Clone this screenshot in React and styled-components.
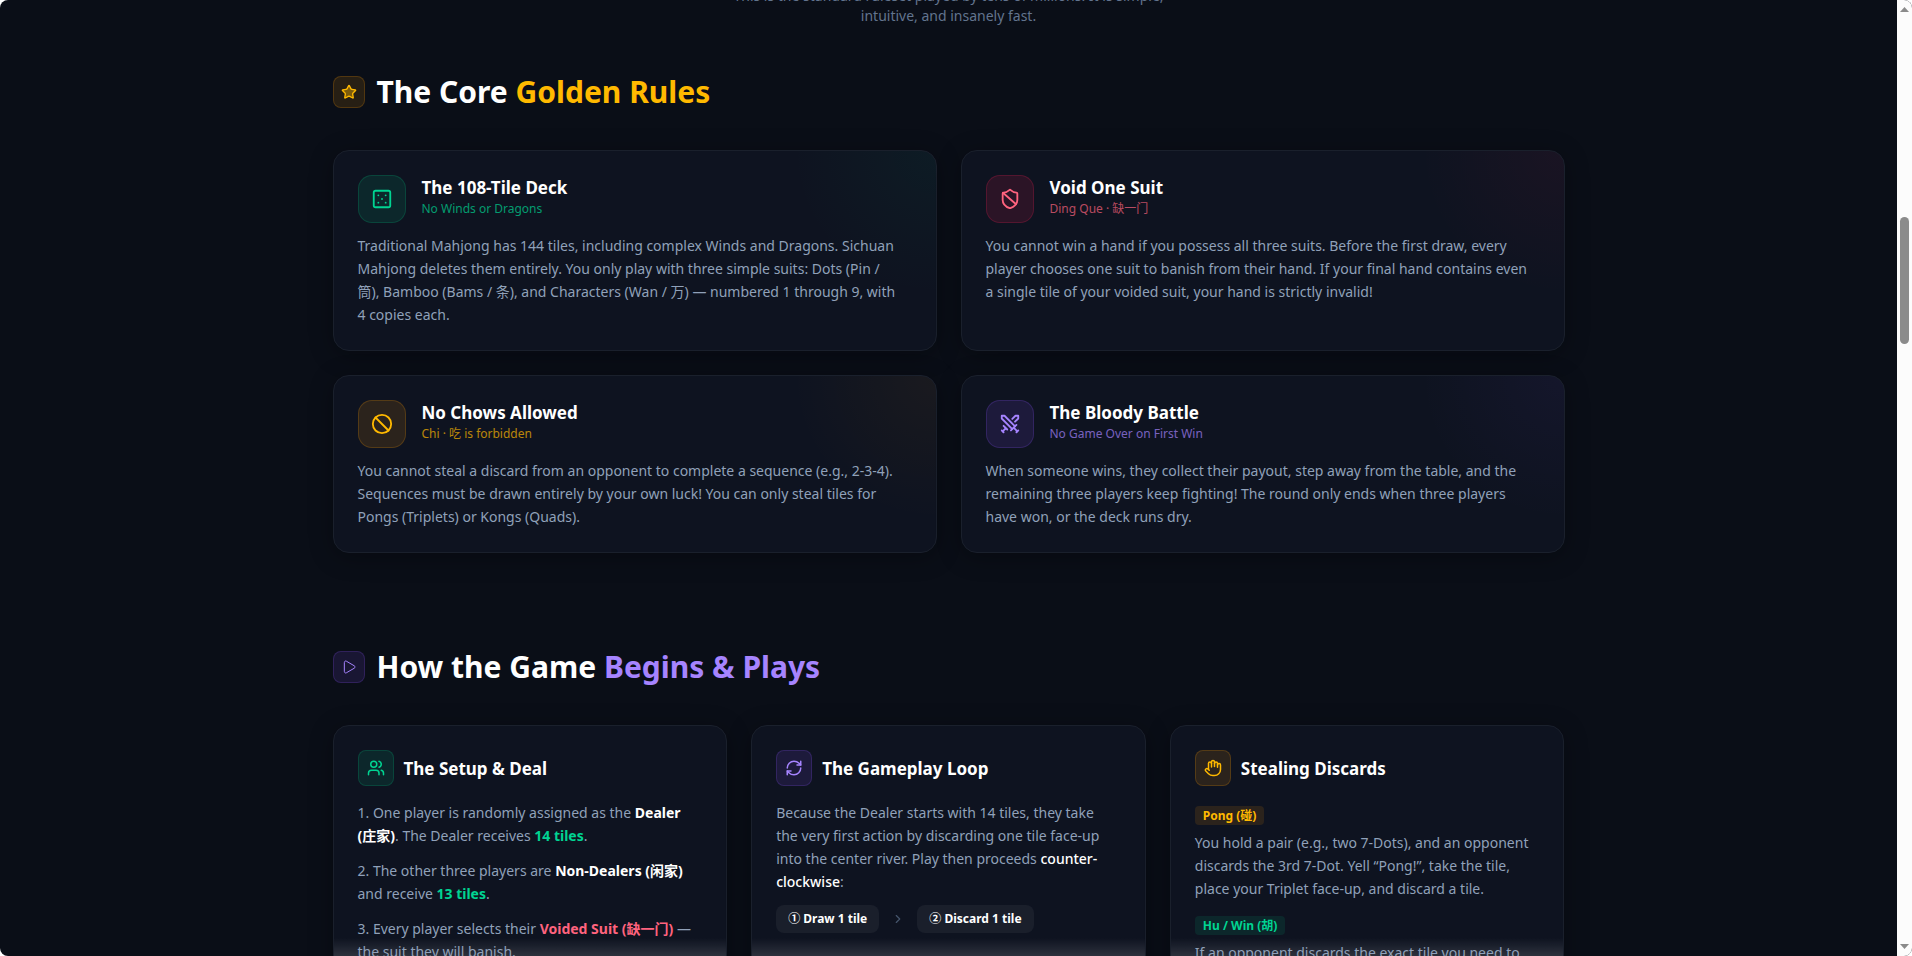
import React from "react";
import styled, { createGlobalStyle } from "styled-components";
import { Star, Play, Dice5, ShieldBan, Ban, Swords, Users, RefreshCw, Hand, ChevronRight } from "lucide-react";

const GlobalStyle = createGlobalStyle`
    *, *::before, *::after {
        box-sizing: border-box;
    }
    body {
        margin: 0;
        background: #fff;
        font-family: "Noto Sans", "Noto Sans CJK SC", sans-serif;
        color: #fff;
    }
    h2, h3, p {
        margin: 0;
    }
`

const tones = {
    green: { text: "#00d492", soft: "0, 188, 125" },
    rose: { text: "#ff637e", soft: "255, 32, 86" },
    amber: { text: "#ffb900", soft: "254, 154, 0" },
    violet: { text: "#a684ff", soft: "142, 81, 255" },
};

const Shell = styled.div`
    display: flex;
    height: 100vh;
    overflow: hidden;
    border-radius: 8px;
    background: #0a0e17;
`

const Page = styled.main`
    flex: 1;
    min-width: 0;
    overflow: hidden;
`

const Container = styled.div`
    max-width: 1280px;
    margin: 0 auto;
    padding: 0 24px;
`

const Intro = styled.p`
    max-width: 448px;
    margin: -14px auto 50px;
    color: #62748e;
    font-size: 14px;
    line-height: 20px;
    text-align: center;
`

const Section = styled.section`
    margin-bottom: 98px;
`

const SectionHead = styled.div`
    display: flex;
    align-items: center;
    gap: 12px;
    height: 32px;
    margin-bottom: 42px;
`

const SectionTitle = styled.h2`
    font-size: 30px;
    line-height: 36px;
    font-weight: 700;
`

const Accent = styled.span`
    color: ${({ $tone }) => tones[$tone].text};
`

const IconBox = styled.div`
    display: flex;
    align-items: center;
    justify-content: center;
    flex: none;
    width: ${({ $size }) => $size}px;
    height: ${({ $size }) => $size}px;
    border: 1px solid rgba(${({ $tone }) => tones[$tone].soft}, 0.2);
    border-radius: ${({ $size }) => ($size > 40 ? 14 : 8)}px;
    background: rgba(${({ $tone }) => tones[$tone].soft}, 0.12);
    color: ${({ $tone }) => tones[$tone].text};
`

const RuleGrid = styled.div`
    display: grid;
    grid-template-columns: repeat(2, 1fr);
    gap: 24px;
`

const StepGrid = styled.div`
    display: grid;
    grid-template-columns: repeat(3, 1fr);
    gap: 24px;
`

const Card = styled.article`
    padding: 24px;
    border: 1px solid #1a202c;
    border-radius: 16px;
    background: #0e1320;
    box-shadow: 0 4px 24px rgba(0, 0, 0, 0.3);
`

const RuleCard = styled(Card)`
    background: radial-gradient(circle at 100% 0, rgba(${({ $tone }) => tones[$tone].soft}, 0.05), transparent 144px), #0e1320;
`

const StepCard = styled(Card)`
    background: linear-gradient(transparent 212px, rgba(255, 255, 255, 0.14) 232px), #0e1320;
`

const CardHead = styled.header`
    display: flex;
    gap: 16px;
    margin-bottom: 11px;
`

const StepCardHead = styled.header`
    display: flex;
    align-items: center;
    gap: 10px;
    margin-bottom: 15px;
`

const CardTitle = styled.h3`
    font-size: 17px;
    line-height: 25px;
    font-weight: 700;
`

const CardSub = styled.p`
    color: ${({ $tone }) => tones[$tone].text};
    font-size: 12px;
    line-height: 18px;
    opacity: 0.7;
`

const Text = styled.p`
    padding-right: 8px;
    color: #90a1b9;
    font-size: 14px;
    line-height: 23px;
    word-break: keep-all;

    & + & {
        margin-top: 12px;
    }
`

const RuleText = styled(Text)`
    padding-right: 10px;
`

const Strong = styled.strong`
    color: ${({ $tone }) => ($tone ? tones[$tone].text : "#fff")};
    font-weight: ${({ $weight }) => $weight || 700};
`

const Flow = styled.div`
    display: flex;
    align-items: center;
    gap: 12px;
    margin-top: 12px;
    color: #45556c;
`

const Chip = styled.span`
    padding: 4px 12px;
    border-radius: 8px;
    background: #1a1f2b;
    color: #fff;
    font-size: 12px;
    line-height: 20px;
    font-weight: 700;
`

const Steal = styled.div`
    padding-top: 5px;

    & + & {
        margin-top: 11px;
    }
`

const Tag = styled.span`
    display: block;
    width: fit-content;
    margin-bottom: 6px;
    padding: 0 8px;
    border-radius: 4px;
    background: rgba(${({ $tone }) => tones[$tone].soft}, 0.12);
    color: ${({ $tone }) => tones[$tone].text};
    font-size: 12px;
    line-height: 19px;
    font-weight: 700;
`

const ScrollBar = styled.div`
    display: flex;
    flex-direction: column;
    align-items: center;
    justify-content: space-between;
    width: 15px;
    padding: 7px 0;
    background: #fcfcfc;
`

const Thumb = styled.div`
    width: 9px;
    height: 127px;
    margin-bottom: 396px;
    border-radius: 5px;
    background: #8b8b8b;
`

const Arrow = ({ down }) => (
    <svg width="9" height="5" viewBox="0 0 9 5" aria-hidden="true">
        <path d={down ? "M0 0h9L4.5 5z" : "M0 5h9L4.5 0z"} fill="#8b8b8b" />
    </svg>
);

const rules = [
    {
        tone: "green", icon: Dice5, title: "The 108-Tile Deck", sub: "No Winds or Dragons",
        text: "Traditional Mahjong has 144 tiles, including complex Winds and Dragons. Sichuan Mahjong deletes them entirely. You only play with three simple suits: Dots (Pin / 筒), Bamboo (Bams / 条), and Characters (Wan / 万) — numbered 1 through 9, with 4 copies each.",
    },
    {
        tone: "rose", icon: ShieldBan, title: "Void One Suit", sub: "Ding Que · 缺一门",
        text: "You cannot win a hand if you possess all three suits. Before the first draw, every player chooses one suit to banish from their hand. If your final hand contains even a single tile of your voided suit, your hand is strictly invalid!",
    },
    {
        tone: "amber", icon: Ban, title: "No Chows Allowed", sub: "Chi · 吃 is forbidden",
        text: "You cannot steal a discard from an opponent to complete a sequence (e.g., 2-3-4). Sequences must be drawn entirely by your own luck! You can only steal tiles for Pongs (Triplets) or Kongs (Quads).",
    },
    {
        tone: "violet", icon: Swords, title: "The Bloody Battle", sub: "No Game Over on First Win",
        text: "When someone wins, they collect their payout, step away from the table, and the remaining three players keep fighting! The round only ends when three players have won, or the deck runs dry.",
    },
];

const StepHead = ({ tone, icon: Icon, title }) => (
    <StepCardHead>
        <IconBox $size={36} $tone={tone}><Icon size={18} /></IconBox>
        <CardTitle>{title}</CardTitle>
    </StepCardHead>
);

const App = () => (
    <Shell>
        <GlobalStyle />
        <Page>
            <Container>
                <Intro>This is the standard ruleset played by tens of millions. It is simple, intuitive, and insanely fast.</Intro>
                <Section>
                    <SectionHead>
                        <IconBox $size={32} $tone="amber"><Star size={16} fill="rgba(255, 185, 0, 0.4)" /></IconBox>
                        <SectionTitle>The Core <Accent $tone="amber">Golden Rules</Accent></SectionTitle>
                    </SectionHead>
                    <RuleGrid>
                        {rules.map(({ tone, icon: Icon, title, sub, text }) => (
                            <RuleCard key={title} $tone={tone}>
                                <CardHead>
                                    <IconBox $size={48} $tone={tone}><Icon size={22} /></IconBox>
                                    <div>
                                        <CardTitle>{title}</CardTitle>
                                        <CardSub $tone={tone}>{sub}</CardSub>
                                    </div>
                                </CardHead>
                                <RuleText>{text}</RuleText>
                            </RuleCard>
                        ))}
                    </RuleGrid>
                </Section>
                <Section>
                    <SectionHead>
                        <IconBox $size={32} $tone="violet"><Play size={16} strokeWidth={1.5} /></IconBox>
                        <SectionTitle>How the Game <Accent $tone="violet">Begins &amp; Plays</Accent></SectionTitle>
                    </SectionHead>
                    <StepGrid>
                        <StepCard>
                            <StepHead tone="green" icon={Users} title="The Setup & Deal" />
                            <Text>1. One player is randomly assigned as the <Strong>Dealer (庄家)</Strong>. The Dealer receives <Strong $tone="green">14 tiles</Strong>.</Text>
                            <Text>2. The other three players are <Strong>Non-Dealers (闲家)</Strong> and receive <Strong $tone="green">13 tiles</Strong>.</Text>
                            <Text>3. Every player selects their <Strong $tone="rose">Voided Suit (缺一门)</Strong> — the suit they will banish.</Text>
                        </StepCard>
                        <StepCard>
                            <StepHead tone="violet" icon={RefreshCw} title="The Gameplay Loop" />
                            <Text>Because the Dealer starts with 14 tiles, they take the very first action by discarding one tile face-up into the center river. Play then proceeds <Strong $weight={500}>counter-clockwise</Strong>:</Text>
                            <Flow>
                                <Chip>① Draw 1 tile</Chip>
                                <ChevronRight size={14} />
                                <Chip>② Discard 1 tile</Chip>
                            </Flow>
                        </StepCard>
                        <StepCard>
                            <StepHead tone="amber" icon={Hand} title="Stealing Discards" />
                            <Steal>
                                <Tag $tone="amber">Pong (碰)</Tag>
                                <Text>You hold a pair (e.g., two 7-Dots), and an opponent discards the 3rd 7-Dot. Yell “Pong!”, take the tile, place your Triplet face-up, and discard a tile.</Text>
                            </Steal>
                            <Steal>
                                <Tag $tone="green">Hu / Win (胡)</Tag>
                                <Text>If an opponent discards the exact tile you need to</Text>
                            </Steal>
                        </StepCard>
                    </StepGrid>
                </Section>
            </Container>
        </Page>
        <ScrollBar aria-hidden="true">
            <Arrow />
            <Thumb />
            <Arrow down />
        </ScrollBar>
    </Shell>
);

export default App;
